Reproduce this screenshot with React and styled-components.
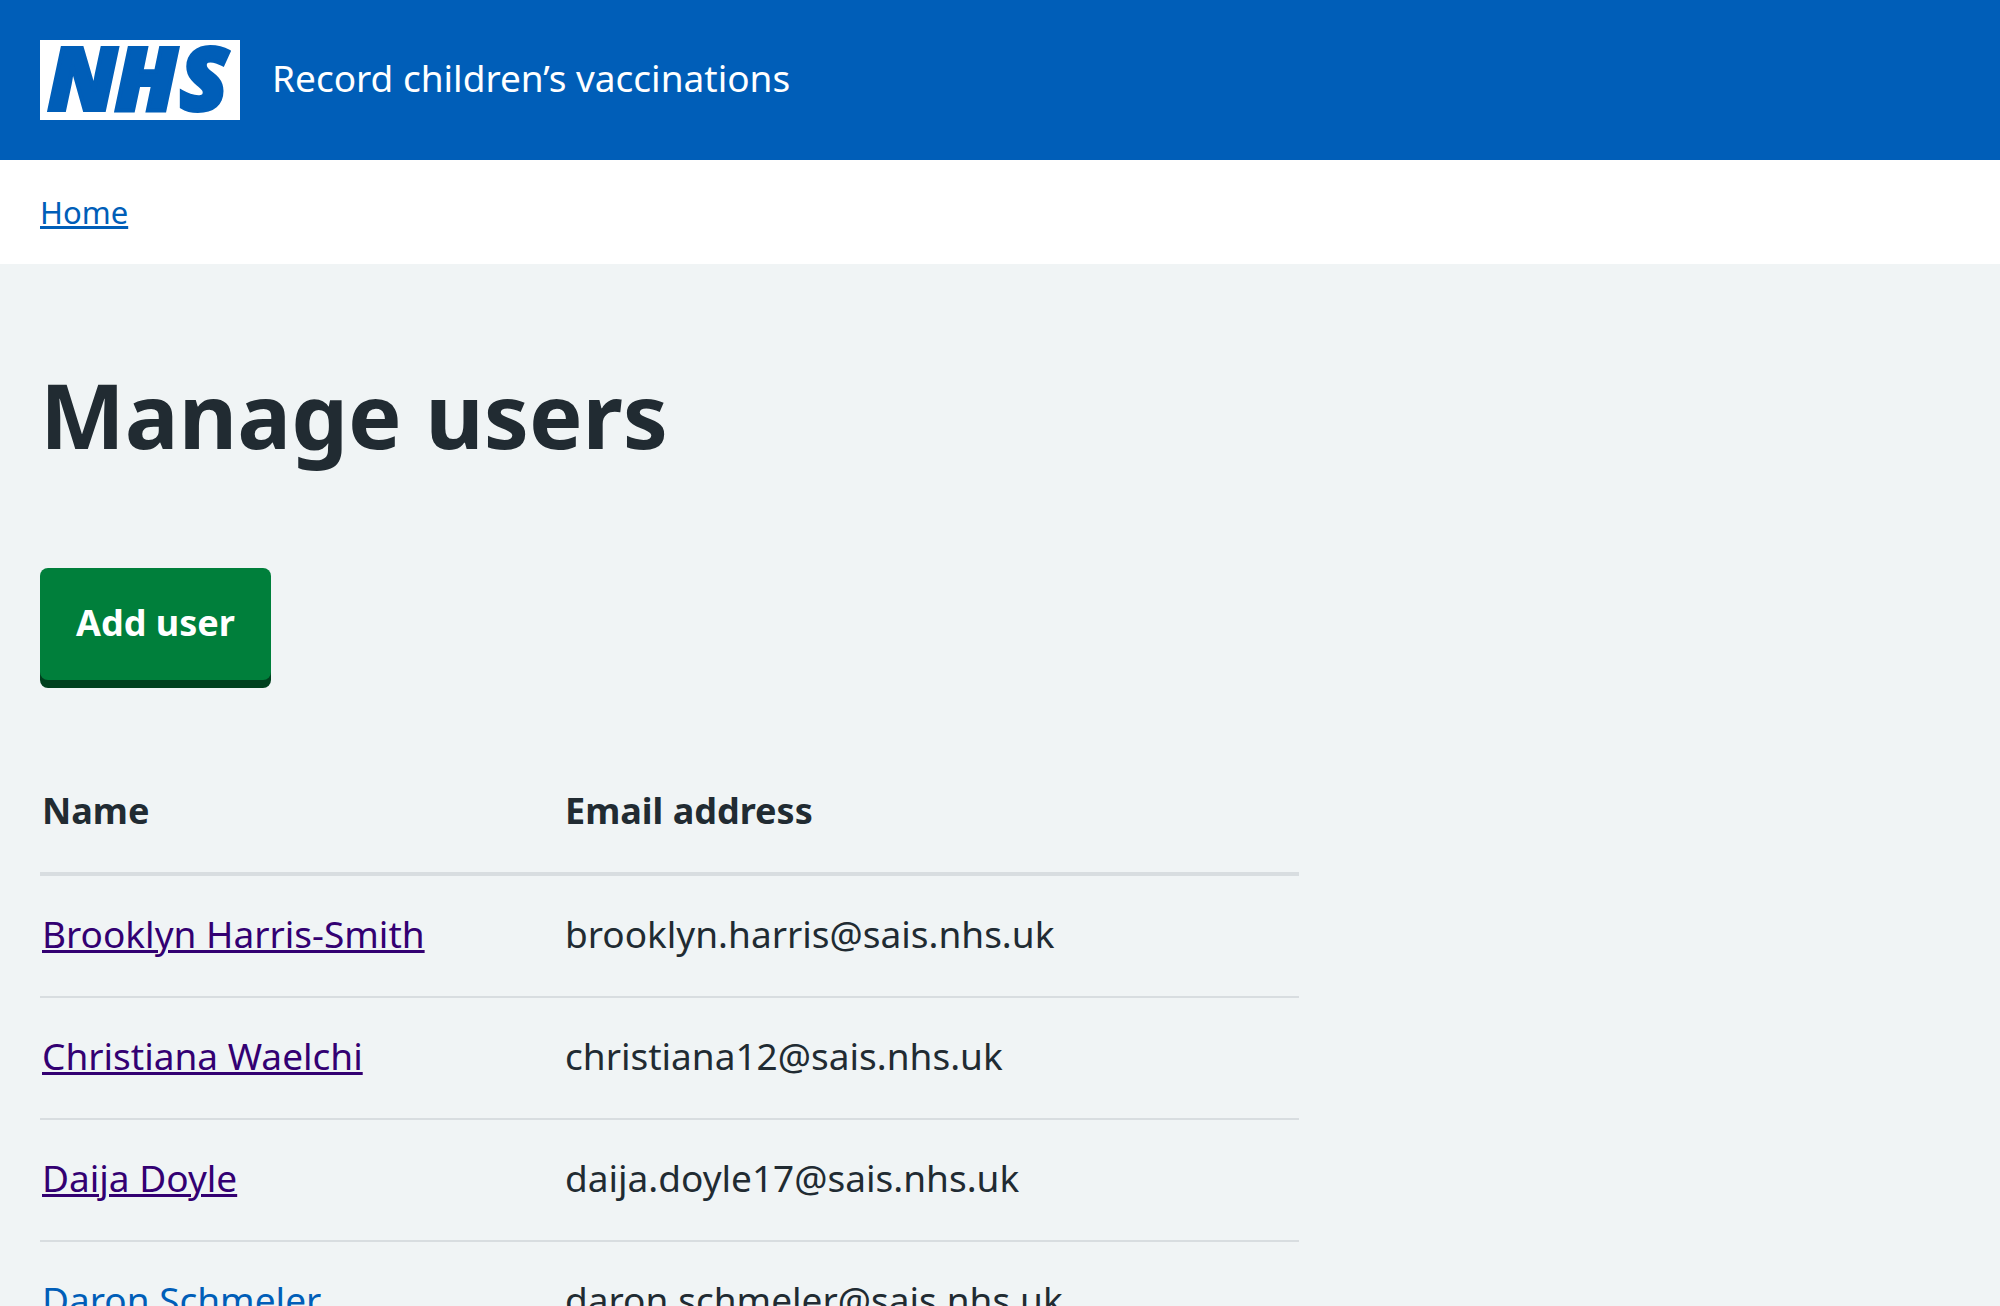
import React from "react";
import styled, { createGlobalStyle } from "styled-components";

const color = {
  blue: "#005eb8",
  purple: "#330072",
  green: "#007f3b",
  greenDark: "#00401e",
  text: "#212b32",
  border: "#d8dde0",
  page: "#f0f4f5",
  white: "#ffffff",
};

const GlobalStyle = createGlobalStyle`
  *, *::before, *::after { box-sizing: border-box; }
  body {
    margin: 0;
    background: ${color.page};
    color: ${color.text};
    font-family: "Noto Sans", "Open Sans", sans-serif;
    font-size: 37px;
    line-height: 56px;
  }
`;

const Page = styled.div`
  height: 100vh;
  overflow: hidden;
`;

const Header = styled.header`
  display: flex;
  align-items: center;
  gap: 32px;
  padding: 40px;
  background: ${color.blue};
`;

const LogoLink = styled.a`
  display: block;
  flex: none;
`;

const Logo = styled.svg`
  display: block;
  width: 200px;
  height: 80px;
  overflow: visible;
`;

const LogoText = styled.text`
  fill: ${color.blue};
  stroke: ${color.blue};
  stroke-width: 4px;
  font-family: "Open Sans", "Noto Sans", sans-serif;
  font-size: 87px;
  font-style: italic;
  font-weight: 800;
`;

const ServiceLink = styled.a`
  padding-bottom: 4px;
  color: ${color.white};
  text-decoration: none;
`;

const Breadcrumb = styled.nav`
  padding: 28px 40px;
  background: ${color.white};
  font-size: 31px;
  line-height: 48px;
`;

const Link = styled.a`
  color: ${(p) => (p.$visited ? color.purple : color.blue)};
  text-decoration: underline;
  text-decoration-thickness: 3px;
  text-underline-offset: 2px;
`;

const Main = styled.main`
  padding: 94px 40px;
`;

const Title = styled.h1`
  margin: 0 0 98px;
  font-size: 90px;
  font-weight: 700;
  line-height: 112px;
`;

const Button = styled.button`
  display: block;
  padding: 27px 36px 29px;
  border: 0;
  border-radius: 8px;
  background: ${color.green};
  box-shadow: 0 8px 0 ${color.greenDark};
  color: ${color.white};
  font: inherit;
  font-size: 36px;
  font-weight: 700;
  cursor: pointer;
`;

const Row = styled.div`
  margin: 72px -32px 0;
`;

const TwoThirds = styled.div`
  width: 66.6666%;
  padding: 0 32px;
`;

const Table = styled.table`
  width: 100%;
  border-collapse: separate;
  border-spacing: 0;
  table-layout: fixed;
`;

const HeadCell = styled.th`
  width: ${(p) => p.$width || "auto"};
  padding: 31px 2px 33px;
  border-bottom: 4px solid ${color.border};
  font-size: 36px;
  font-weight: 700;
  text-align: left;
`;

const Cell = styled.td`
  padding: 30px 2px 34px;
  border-bottom: 2px solid ${color.border};
`;

const users = [
  { name: "Brooklyn Harris-Smith", email: "brooklyn.harris@sais.nhs.uk", visited: true },
  { name: "Christiana Waelchi", email: "christiana12@sais.nhs.uk", visited: true },
  { name: "Daija Doyle", email: "daija.doyle17@sais.nhs.uk", visited: true },
  { name: "Daron Schmeler", email: "daron.schmeler@sais.nhs.uk", visited: false },
];

export default function App() {
  return (
    <Page>
      <GlobalStyle />
      <Header>
        <LogoLink href="#home" aria-label="NHS homepage">
          <Logo viewBox="0 0 200 80" aria-hidden="true">
            <rect width="200" height="80" fill={color.white} />
            <LogoText x="8 75 140" y="70">NHS</LogoText>
          </Logo>
        </LogoLink>
        <ServiceLink href="#service">Record children’s vaccinations</ServiceLink>
      </Header>
      <Breadcrumb aria-label="Breadcrumb">
        <Link href="#home">Home</Link>
      </Breadcrumb>
      <Main>
        <Title>Manage users</Title>
        <Button type="button">Add user</Button>
        <Row>
          <TwoThirds>
            <Table>
              <thead>
                <tr>
                  <HeadCell scope="col" $width="523px">Name</HeadCell>
                  <HeadCell scope="col">Email address</HeadCell>
                </tr>
              </thead>
              <tbody>
                {users.map((user) => (
                  <tr key={user.email}>
                    <Cell>
                      <Link href="#user" $visited={user.visited}>{user.name}</Link>
                    </Cell>
                    <Cell>{user.email}</Cell>
                  </tr>
                ))}
              </tbody>
            </Table>
          </TwoThirds>
        </Row>
      </Main>
    </Page>
  );
}
